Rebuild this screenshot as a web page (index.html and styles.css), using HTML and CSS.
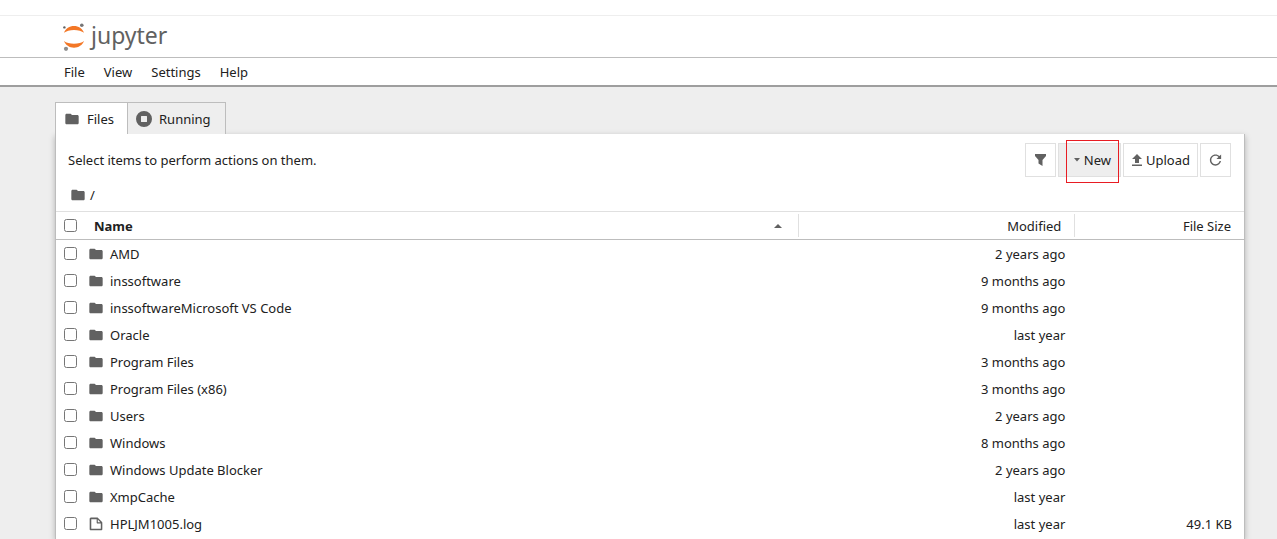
FILE: index.html
```html
<!DOCTYPE html>
<html lang="en">
<head>
    <meta charset="UTF-8">
    <meta name="viewport" content="width=device-width, initial-scale=1.0">
    <title>Home - Jupyter</title>
    <link rel="stylesheet" href="styles.css">
</head>
<body>
    <svg class="sprite" aria-hidden="true">
        <symbol id="folder" viewBox="0 0 24 24">
            <path d="M10 4H4c-1.100 0-1.990.9-1.990 2L2 18c0 1.100.9 2 2 2h16c1.100 0 2-.9 2-2V8c0-1.100-.9-2-2-2h-8l-2-2z"/>
        </symbol>
        <symbol id="file" viewBox="0 0 22 22">
            <path d="M19.300 8.200l-5.500-5.500c-.3-.3-.7-.5-1.200-.5H3.900c-.8.100-1.600.9-1.600 1.800v14.100c0 .9.700 1.600 1.600 1.600h14.200c.9 0 1.600-.7 1.600-1.600V9.400c.1-.5-.1-.9-.4-1.200zm-5.800-3.300l3.400 3.600h-3.400V4.900zm3.900 12.700H4.700c-.1 0-.2 0-.2-.2V4.700c0-.2.100-.3.200-.3h7.200v4.400s0 .8.300 1.100c.3.300 1.100.3 1.100.3h4.300v7.200s-.1.200-.2.200z"/>
        </symbol>
    </svg>

    <header class="top">
        <a class="logo" href="/tree">
            <svg width="22" height="28" viewBox="0 0 22 28">
                <path fill="#f37726" d="M1 9.700C2.500 5.700 6.500 3 11 3s8.500 2.700 10 6.700C19 8 15 6.900 11 6.900S3 8 1 9.700z"/>
                <path fill="#f37726" d="M1 18c1.500 4 5.500 6.700 10 6.700s8.500-2.700 10-6.700c-2 1.700-6 2.800-10 2.800S3 19.700 1 18z"/>
                <circle fill="#767677" cx="18.800" cy="2.200" r="1.800"/>
                <circle fill="#616262" cx="1.400" cy="4.400" r="1.200"/>
                <circle fill="#8c8c8c" cx="3" cy="25.800" r="2.100"/>
            </svg>
            <span>jupyter</span>
        </a>
    </header>

    <nav class="menu">
        <button>File</button>
        <button>View</button>
        <button>Settings</button>
        <button>Help</button>
    </nav>

    <main>
        <div class="tabs">
            <button class="tab active">
                <svg class="icon" width="16" height="16"><use href="#folder"/></svg>
                Files
            </button>
            <button class="tab">
                <svg class="icon" width="16" height="16" viewBox="1 1 16 16">
                    <path fill-rule="evenodd" d="M9 1a8 8 0 1 0 0 16A8 8 0 0 0 9 1zM6.500 6h5a.5.5 0 0 1 .5.5v5a.5.5 0 0 1-.5.5h-5a.5.5 0 0 1-.5-.5v-5a.5.5 0 0 1 .5-.5z"/>
                </svg>
                Running
            </button>
        </div>

        <section class="panel">
            <div class="toolbar">
                <span class="hint">Select items to perform actions on them.</span>
                <button class="tool" aria-label="Filter files">
                    <svg class="icon" width="15" height="16" viewBox="0 0 15 16">
                        <path d="M2 2h11v2L9.500 8v6L5.500 11.500V8L2 4z"/>
                    </svg>
                </button>
                <button class="tool new-btn">
                    <svg class="icon" width="8" height="4" viewBox="0 0 8 4"><path d="M1 0h6L4 3.500z"/></svg>
                    New
                </button>
                <button class="tool">
                    <svg class="icon" width="12" height="14" viewBox="0 0 12 14">
                        <path d="M6 1l5 5H8v4H4V6H1zM1 11.500h10V13H1z"/>
                    </svg>
                    Upload
                </button>
                <button class="tool" aria-label="Refresh">
                    <svg class="icon" width="15" height="16" viewBox="1 1 16 16">
                        <path d="M9 13.500c-2.490 0-4.500-2.010-4.500-4.500S6.510 4.500 9 4.500c1.240 0 2.360.52 3.170 1.330L10 8h5V3l-1.760 1.760C12.150 3.680 10.660 3 9 3 5.690 3 3.010 5.690 3.010 9S5.690 15 9 15c2.970 0 5.430-2.160 5.900-5h-1.520c-.46 2-2.240 3.500-4.380 3.500z"/>
                    </svg>
                </button>
            </div>

            <div class="crumbs">
                <svg class="icon" width="16" height="16"><use href="#folder"/></svg>
                <a href="/tree">/</a>
            </div>

            <table class="listing">
                <thead>
                    <tr>
                        <th class="name">
                            <div class="cell">
                                <input type="checkbox" aria-label="Select all files">
                                <span class="title">Name</span>
                                <svg class="icon" width="8" height="4" viewBox="0 0 8 4"><path d="M0 4h8L4 0z"/></svg>
                            </div>
                        </th>
                        <th class="modified"><div class="cell">Modified</div></th>
                        <th class="size"><div class="cell">File Size</div></th>
                    </tr>
                </thead>
                <tbody>
                    <tr>
                        <td><label><input type="checkbox"><svg class="icon" width="16" height="16"><use href="#folder"/></svg>AMD</label></td>
                        <td>2 years ago</td>
                        <td></td>
                    </tr>
                    <tr>
                        <td><label><input type="checkbox"><svg class="icon" width="16" height="16"><use href="#folder"/></svg>inssoftware</label></td>
                        <td>9 months ago</td>
                        <td></td>
                    </tr>
                    <tr>
                        <td><label><input type="checkbox"><svg class="icon" width="16" height="16"><use href="#folder"/></svg>inssoftwareMicrosoft VS Code</label></td>
                        <td>9 months ago</td>
                        <td></td>
                    </tr>
                    <tr>
                        <td><label><input type="checkbox"><svg class="icon" width="16" height="16"><use href="#folder"/></svg>Oracle</label></td>
                        <td>last year</td>
                        <td></td>
                    </tr>
                    <tr>
                        <td><label><input type="checkbox"><svg class="icon" width="16" height="16"><use href="#folder"/></svg>Program Files</label></td>
                        <td>3 months ago</td>
                        <td></td>
                    </tr>
                    <tr>
                        <td><label><input type="checkbox"><svg class="icon" width="16" height="16"><use href="#folder"/></svg>Program Files (x86)</label></td>
                        <td>3 months ago</td>
                        <td></td>
                    </tr>
                    <tr>
                        <td><label><input type="checkbox"><svg class="icon" width="16" height="16"><use href="#folder"/></svg>Users</label></td>
                        <td>2 years ago</td>
                        <td></td>
                    </tr>
                    <tr>
                        <td><label><input type="checkbox"><svg class="icon" width="16" height="16"><use href="#folder"/></svg>Windows</label></td>
                        <td>8 months ago</td>
                        <td></td>
                    </tr>
                    <tr>
                        <td><label><input type="checkbox"><svg class="icon" width="16" height="16"><use href="#folder"/></svg>Windows Update Blocker</label></td>
                        <td>2 years ago</td>
                        <td></td>
                    </tr>
                    <tr>
                        <td><label><input type="checkbox"><svg class="icon" width="16" height="16"><use href="#folder"/></svg>XmpCache</label></td>
                        <td>last year</td>
                        <td></td>
                    </tr>
                    <tr>
                        <td><label><input type="checkbox"><svg class="icon" width="16" height="16"><use href="#file"/></svg>HPLJM1005.log</label></td>
                        <td>last year</td>
                        <td>49.1 KB</td>
                    </tr>
                </tbody>
            </table>
        </section>
    </main>
</body>
</html>
```
FILE: styles.css
```css
* {
    box-sizing: border-box;
}

body {
    display: flex;
    flex-direction: column;
    height: 100vh;
    margin: 0;
    padding-top: 15px;
    overflow: hidden;
    background-color: #fff;
    color: #212121;
    font-family: "Noto Sans", "Open Sans", sans-serif;
    font-size: 13px;
    line-height: 18px;
}

button {
    font: inherit;
    color: inherit;
    cursor: pointer;
}

a {
    color: inherit;
    text-decoration: none;
}

.sprite {
    display: none;
}

.icon {
    flex: none;
    fill: #616161;
}

.top {
    flex: none;
    padding: 7px 63px 6px;
    border-top: 1px solid #eee;
    border-bottom: 1px solid #bdbdbd;
}

.logo {
    display: flex;
    align-items: center;
    gap: 6px;
    color: #616161;
    font-size: 23px;
    line-height: 28px;
}

.logo span {
    padding-bottom: 4px;
    line-height: 24px;
}

.menu {
    flex: none;
    display: flex;
    height: 29px;
    padding: 0 54px;
    border-bottom: 2px solid #9e9e9e;
}

.menu button {
    padding: 0 9px 0 10px;
    border: none;
    background: none;
}

main {
    flex: 1;
    display: flex;
    flex-direction: column;
    padding: 15px 32px 0 55px;
    background-color: #eee;
}

.tabs {
    display: flex;
    height: 32px;
    z-index: 1;
}

.tab {
    display: flex;
    align-items: center;
    gap: 7px;
    padding: 0 14px 0 8px;
    border: 1px solid #bdbdbd;
    border-bottom: none;
    background-color: #eee;
}

.tab + .tab {
    border-left: none;
}

.tab.active {
    padding-right: 13px;
    background-color: #fff;
}

.panel {
    flex: 1 0 auto;
    border-left: 1px solid #bdbdbd;
    border-right: 1px solid #bdbdbd;
    background-color: #fff;
    box-shadow: 0 2px 6px rgba(0, 0, 0, 0.25);
}

.toolbar {
    display: flex;
    align-items: center;
    gap: 2px;
    padding: 9px 13px 9px 12px;
}

.hint {
    flex: 1;
}

.tool {
    display: flex;
    align-items: center;
    gap: 3px;
    height: 34px;
    padding: 0 7px;
    border: 1px solid #e0e0e0;
    background-color: #fff;
}

.new-btn {
    position: relative;
    padding: 0 9px 0 14px;
    background-color: #eee;
}

.new-btn::after {
    content: "";
    position: absolute;
    inset: -4px 1px -7px 7px;
    border: 1px solid #e81c23;
}

.crumbs {
    display: flex;
    align-items: center;
    gap: 4px;
    height: 18px;
    padding: 0 14px;
    margin-bottom: 7px;
}

.listing {
    width: 100%;
    border-collapse: separate;
    border-spacing: 0;
    table-layout: fixed;
}

.listing input {
    width: 13px;
    height: 13px;
    margin: 0;
}

.listing th {
    height: 29px;
    padding: 0;
    border-top: 1px solid #e0e0e0;
    border-bottom: 1px solid #bdbdbd;
    font-weight: normal;
}

.listing .name {
    width: 62.5%;
}

.listing .modified {
    width: 23.3%;
}

.cell {
    display: flex;
    align-items: center;
    justify-content: flex-end;
    height: 23px;
    padding: 0 13px;
    border-right: 1px solid #e0e0e0;
}

.name .cell {
    padding: 0 16px 0 8px;
}

.size .cell {
    border-right: none;
}

.title {
    flex: 1;
    padding-left: 17px;
    font-weight: bold;
    text-align: left;
}

.listing td {
    height: 27px;
    padding: 0 12px 0 8px;
    text-align: right;
}

.listing td label {
    display: flex;
    align-items: center;
}

.listing td .icon {
    margin: 0 6px 0 11px;
}

.listing td:nth-child(2) {
    padding-right: 10px;
}
```
